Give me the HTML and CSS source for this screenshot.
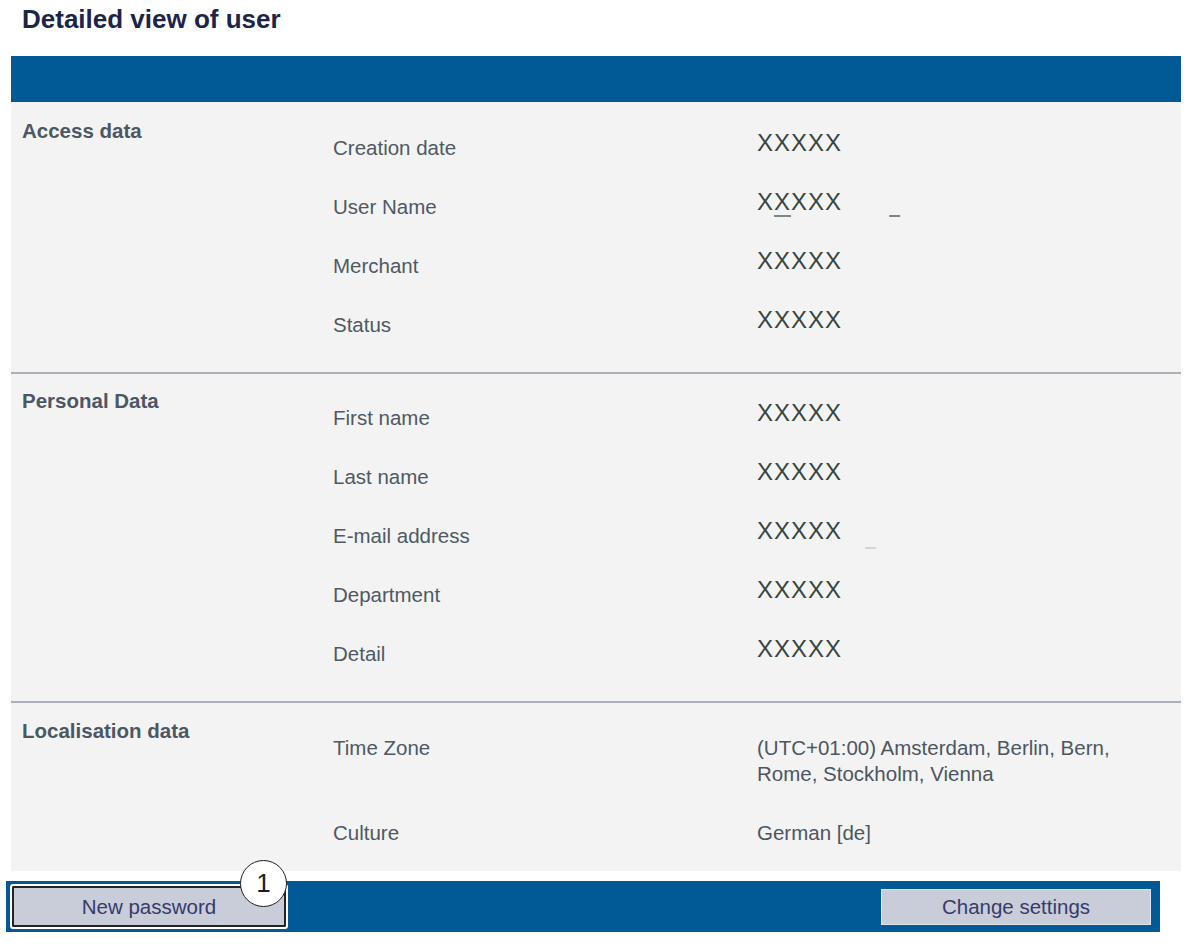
FILE: index.html
```html
<!DOCTYPE html>
<html lang="en">
<head>
<meta charset="utf-8">
<title>Detailed view of user</title>
<link rel="stylesheet" href="styles.css">
</head>
<body>
<div class="page">
  <h1 class="title">Detailed view of user</h1>
  <div class="panel">
    <div class="panel-head"></div>

    <section class="section">
      <h2 class="sec-title">Access data</h2>
      <div class="rows">
        <div class="row"><span class="label">Creation date</span><span class="xval">XXXXX</span></div>
        <div class="row"><span class="label">User Name</span><span class="xval">X<span class="under">X</span>XXX<span class="dash dash-user">&nbsp;&nbsp;</span></span></div>
        <div class="row"><span class="label">Merchant</span><span class="xval">XXXXX</span></div>
        <div class="row"><span class="label">Status</span><span class="xval">XXXXX</span></div>
      </div>
    </section>

    <section class="section sep">
      <h2 class="sec-title">Personal Data</h2>
      <div class="rows">
        <div class="row"><span class="label">First name</span><span class="xval">XXXXX</span></div>
        <div class="row"><span class="label">Last name</span><span class="xval">XXXXX</span></div>
        <div class="row"><span class="label">E-mail address</span><span class="xval">XXXXX<span class="dash dash-mail">&nbsp;&nbsp;</span></span></div>
        <div class="row"><span class="label">Department</span><span class="xval">XXXXX</span></div>
        <div class="row"><span class="label">Detail</span><span class="xval">XXXXX</span></div>
      </div>
    </section>

    <section class="section sep last">
      <h2 class="sec-title">Localisation data</h2>
      <div class="rows">
        <div class="row"><span class="label">Time Zone</span><span class="tval">(UTC+01:00) Amsterdam, Berlin, Bern, Rome, Stockholm, Vienna</span></div>
        <div class="row"><span class="label">Culture</span><span class="tval">German [de]</span></div>
      </div>
    </section>
  </div>

  <div class="footer">
    <div class="btn-wrap">
      <button class="btn btn-new" type="button">New password</button>
      <span class="callout">1</span>
    </div>
    <button class="btn btn-change" type="button">Change settings</button>
  </div>
</div>
</body>
</html>
```

FILE: styles.css
```css
html, body {
  margin: 0;
  padding: 0;
  background: #ffffff;
}

body {
  font-family: "Liberation Sans", Arial, sans-serif;
}

.page {
  padding: 4px 0 0 6px;
  width: 1175px;
}

.title {
  margin: 0 0 22px 16px;
  font-size: 26px;
  line-height: 30px;
  font-weight: bold;
  color: #1c2548;
}

.panel {
  margin-left: 5px;
  width: 1170px;
  background: #f3f3f3;
}

.panel-head {
  height: 46px;
  background: #015a96;
}

.section {
  display: flex;
  padding: 16px 0 17.5px;
}

.section.sep {
  border-top: 2px solid #aab1b9;
  padding-top: 15px;
}

.section.sep .sec-title {
  margin-top: 0.5px;
}

.section.last {
  padding-bottom: 9px;
}

.sec-title {
  width: 322px;
  flex: none;
  box-sizing: border-box;
  margin: 1px 0 0;
  padding-left: 11px;
  font-size: 20.5px;
  line-height: 24px;
  font-weight: bold;
  color: #4d5763;
}

.rows {
  flex: 1;
  display: flex;
  flex-direction: column;
}

.row {
  display: grid;
  grid-template-columns: 424px 1fr;
  align-items: start;
  min-height: 59px;
  box-sizing: border-box;
  padding: 16.5px 20px 16.5px 0;
  font-size: 20.5px;
  line-height: 26px;
}

.label {
  color: #4e5964;
}

.xval {
  font-size: 24px;
  line-height: 16px;
  letter-spacing: 1px;
  color: #37463f;
}

.under {
  text-decoration: underline;
  text-decoration-color: #7d8886;
  text-decoration-thickness: 2px;
  text-underline-offset: 5px;
}

.dash {
  font-size: 20px;
  letter-spacing: 0;
  text-decoration: underline;
  text-decoration-thickness: 2px;
}

.dash-user {
  margin-left: 47px;
  text-decoration-color: #7d8886;
  text-underline-offset: 5px;
}

.dash-mail {
  margin-left: 23px;
  text-decoration-color: #d2d6d6;
  text-underline-offset: 8px;
}

.tval {
  color: #4c5661;
}

.footer {
  display: flex;
  justify-content: space-between;
  align-items: center;
  box-sizing: border-box;
  width: 1154px;
  height: 51px;
  margin-top: 10px;
  padding: 0 9px 0 4px;
  background: #015a96;
}

.btn-wrap {
  position: relative;
}

.btn {
  font-family: "Liberation Sans", Arial, sans-serif;
  font-size: 20.5px;
  color: #363b6b;
  background: #c9cdd9;
  margin: 0;
  padding: 0;
  cursor: pointer;
}

.btn-new {
  display: block;
  width: 278px;
  height: 45px;
  border: 2px solid #ffffff;
  border-radius: 3px;
  box-shadow: inset 0 0 0 2px #242424;
}

.btn-change {
  width: 270px;
  height: 36px;
  border: 1px solid #dfe3ea;
}

.callout {
  position: absolute;
  left: 230px;
  top: -24px;
  width: 47px;
  height: 47px;
  box-sizing: border-box;
  border: 1.5px solid #1e1e1e;
  border-radius: 50%;
  background: #ffffff;
  color: #1e1e1e;
  font-size: 26px;
  line-height: 44px;
  text-align: center;
}
```
